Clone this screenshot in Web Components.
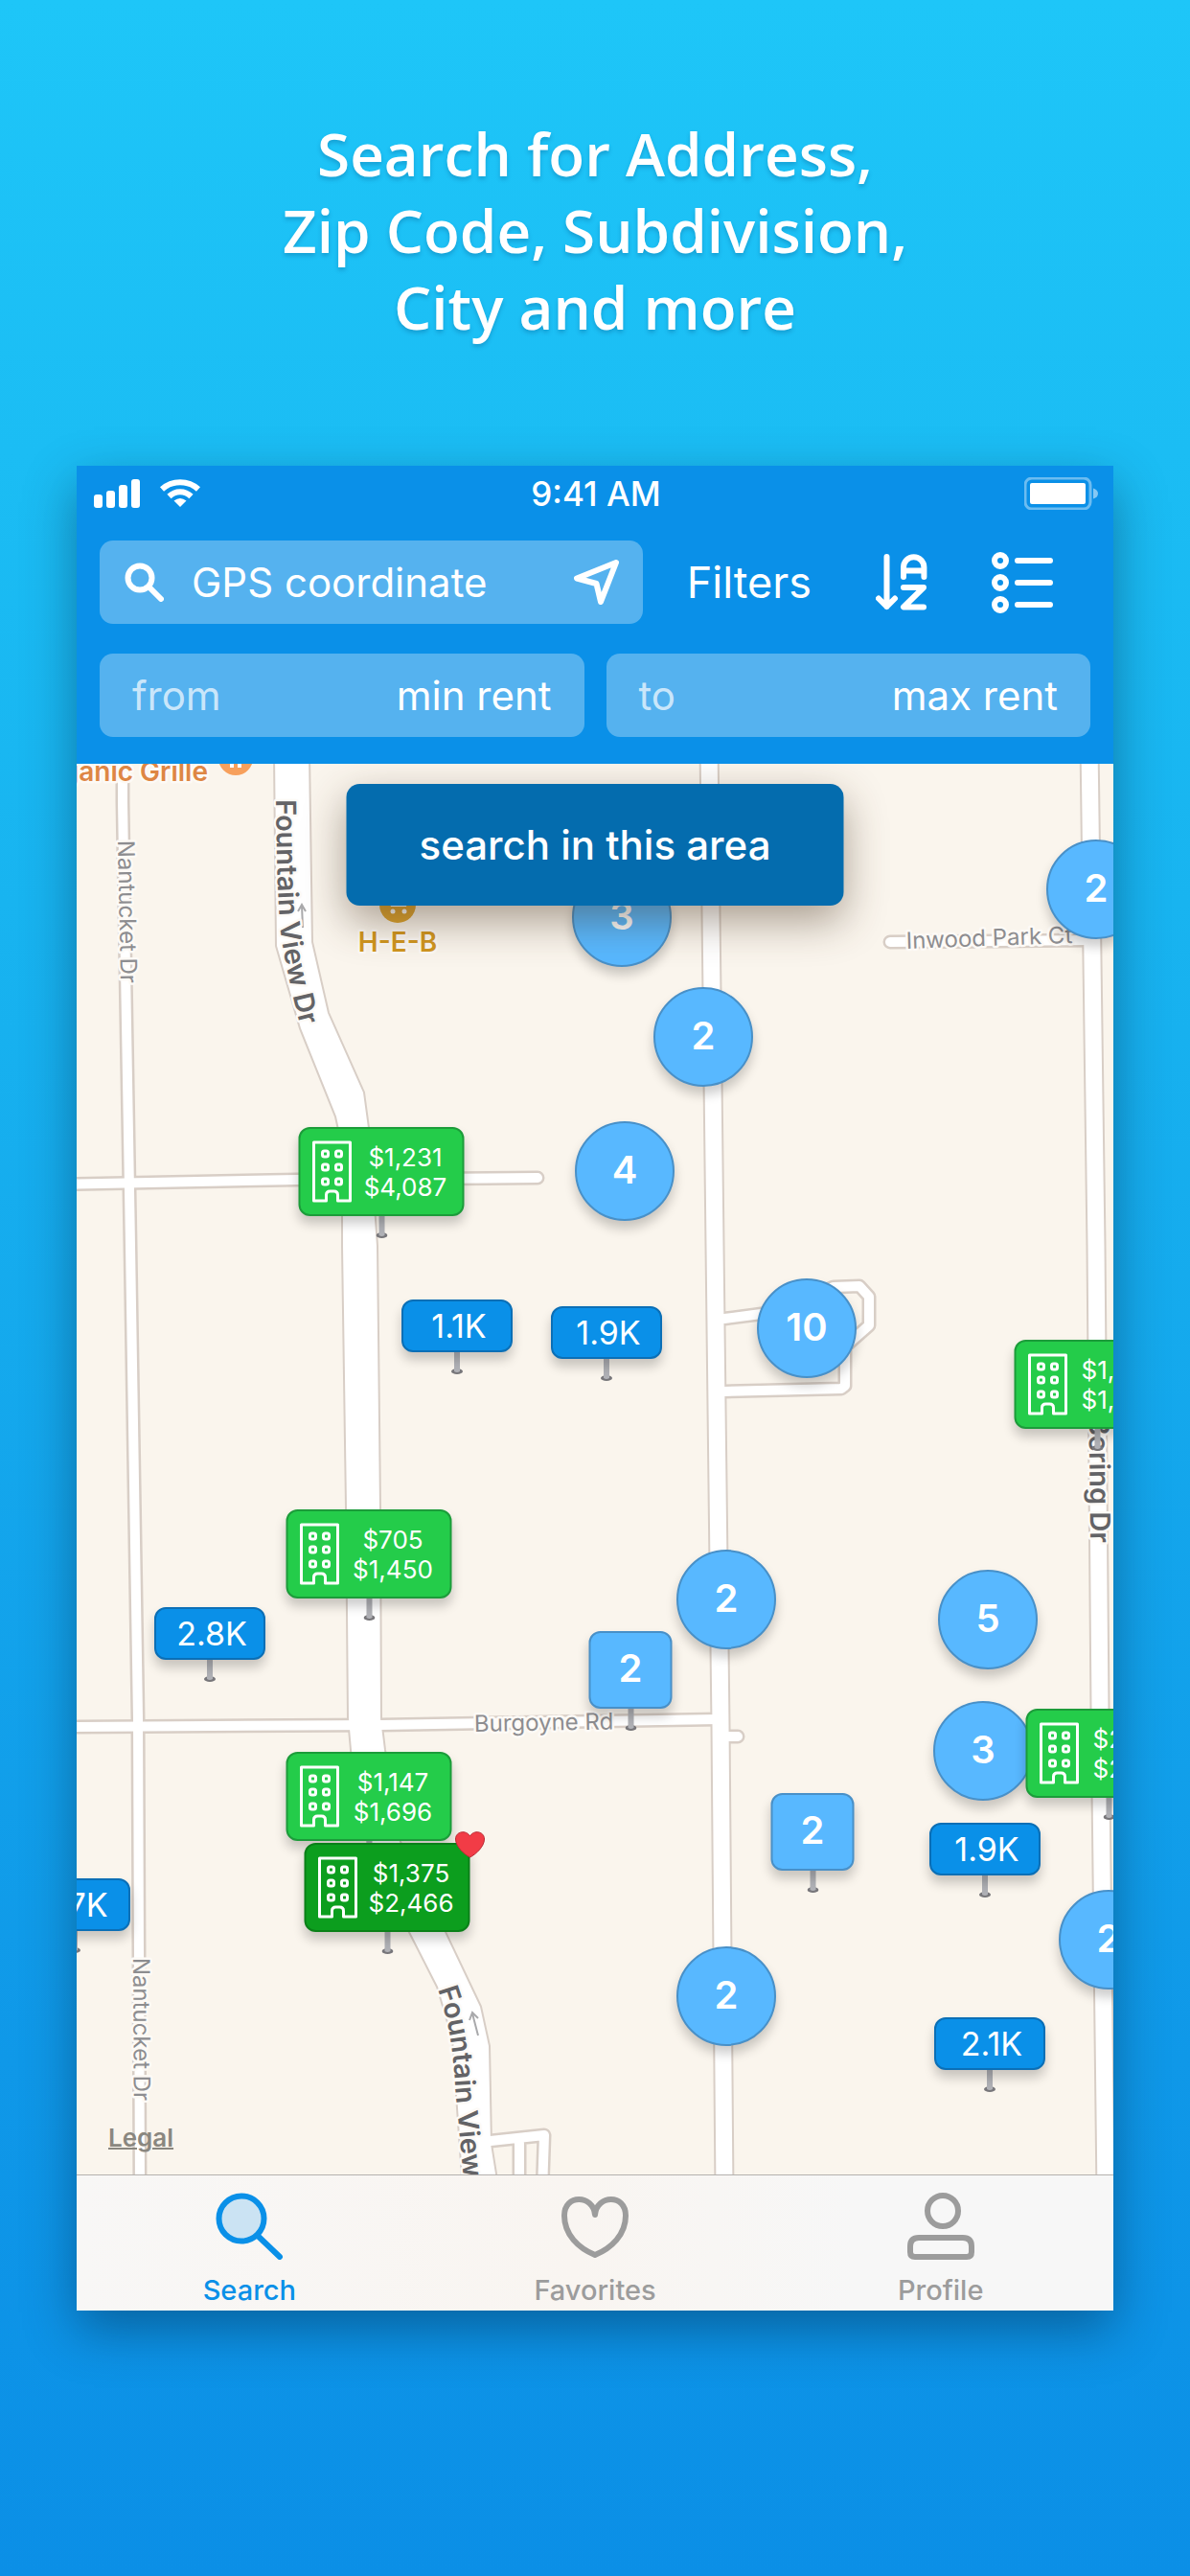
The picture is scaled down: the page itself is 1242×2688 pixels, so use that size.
<!DOCTYPE html>
<html lang="en">
<head>
<meta charset="utf-8">
<meta name="viewport" content="width=device-width, initial-scale=1">
<title>Rental map search</title>
<style>
  html { min-height: 100%; background: linear-gradient(#1ec6f8, #18b4f0 35%, #0f98e8 80%, #0b8fe6); }
  body { margin: 0; font-family: Inter, "Liberation Sans", sans-serif; color: #fff; }
</style>
</head>
<body>
<promo-page></promo-page>

<script>
const define = (name, html, setup) => {
  const template = document.createElement("template");
  template.innerHTML = html;
  customElements.define(name, class extends HTMLElement {
    constructor() {
      super();
      this.attachShadow({ mode: "open" }).append(template.content.cloneNode(true));
    }
    connectedCallback() { if (setup) setup(this, this.shadowRoot); }
  });
};

/* Status bar: signal, wifi, clock, battery */
define("status-bar", `
<style>
  :host { display: grid; grid-template-columns: 1fr auto 1fr; align-items: center; height: 58px; padding: 0 16px 0 18px; column-gap: 8px; font-size: 35px; font-weight: 500; }
  svg { display: block; }
  .left { display: flex; gap: 20px; }
  .right { justify-self: end; }
</style>
<div class="left">
  <svg width="49" height="30" fill="#fff" aria-hidden="true"><rect y="16" width="9" height="14" rx="3"/><rect x="13" y="12" width="9" height="18" rx="3"/><rect x="26" y="6" width="9" height="24" rx="3"/><rect x="39" width="9" height="30" rx="3"/></svg>
  <svg width="42" height="30" fill="none" stroke="#fff" stroke-width="6" aria-hidden="true"><path d="M2 10.500C12.500 .8 29.500 .8 40 10.500"/><path d="M9.500 18C16 11.600 26 11.600 32.500 18"/><path d="M14.500 22.500Q21 17.500 27.500 22.500L21 29Z" fill="#fff" stroke="none"/></svg>
</div>
<span>9:41 AM</span>
<svg class="right" width="77" height="34" aria-hidden="true"><rect x="1" y="1" width="68" height="32" rx="7" fill="none" stroke="#fff" stroke-opacity=".4" stroke-width="3"/><rect x="6" y="6" width="58" height="22" rx="2" fill="#fff"/><path d="M72 11.500q5 1.500 5 5.500t-5 5.500z" fill="#fff" fill-opacity=".5"/></svg>
`);

/* Translucent text box with an optional leading caption or icon */
define("field-box", `
<style>
  :host { display: flex; align-items: center; flex: 1; min-width: 0; height: 87px; box-sizing: border-box; padding: 0 34px; border-radius: 14px; background: rgb(255 255 255 / .31); font-size: 42px; }
  :host([wide]) { padding: 0 25px 0 26px; gap: 29px; }
  label { display: flex; color: rgb(255 255 255 / .7); }
  input { flex: 1; min-width: 0; width: 0; padding: 0; border: 0; outline: 0; background: none; font: inherit; color: #fff; text-align: right; }
  :host([wide]) input { text-align: left; }
  ::slotted(svg), ::slotted(button) { flex: none; }
</style>
<label for="box"><slot></slot></label><input id="box" type="text"><slot name="end"></slot>
`, (host, root) => {
  const input = root.querySelector("input");
  input.value = host.getAttribute("value");
  if (host.hasAttribute("label")) input.setAttribute("aria-label", host.getAttribute("label"));
});

define("search-header", `
<style>
  :host { display: block; background: #0a90e8; }
  form { display: flex; flex-direction: column; gap: 31px; padding: 20px 24px 28px; }
  .row { display: flex; align-items: center; gap: 23px; }
  .actions { display: flex; align-items: center; gap: 67px; padding: 0 39px 0 23px; }
  button { display: block; padding: 0; border: 0; background: none; font: inherit; font-size: 45px; color: #fff; }
  svg { display: block; fill: none; stroke: #fff; stroke-width: 6; stroke-linecap: round; stroke-linejoin: round; }
</style>
<status-bar></status-bar>
<form>
  <div class="row">
    <field-box wide label="Search" value="GPS coordinate">
      <svg width="41" height="41"><circle cx="16" cy="16" r="12.500"/><path d="M26 26L38 38"/></svg>
      <button slot="end" type="button" aria-label="Use my location"><svg width="47" height="47"><path d="M44 3L3 19.500L23.500 25L28 44Z"/></svg></button>
    </field-box>
    <div class="actions">
      <button type="button">Filters</button>
      <button type="button" aria-label="Sort"><svg width="54" height="59"><path d="M11.500 3V55M3 46.500L11.500 55L20 46.500M29 24V14a10.700 10.700 0 0 1 21.400 0V24M29 17.500H50M29 35H50L29 55.500H50"/></svg></button>
      <button type="button" aria-label="List view"><svg width="64" height="64"><circle cx="9" cy="9" r="6"/><circle cx="9" cy="32" r="6"/><circle cx="9" cy="55" r="6"/><path d="M27 9H61M27 32H61M27 55H61"/></svg></button>
    </div>
  </div>
  <div class="row">
    <field-box value="min rent">from</field-box>
    <field-box value="max rent">to</field-box>
  </div>
</form>
`);

/* Marker on the map: --x is its centre, --y its top */
define("map-pin", `
<style>
  :host { position: absolute; left: var(--x); top: var(--y); transform: translateX(-50%); }
  button { display: flex; align-items: center; justify-content: center; box-sizing: border-box; margin: 0; padding: 0; border: 2px solid #0b6fb6; border-radius: 12px; background: #0a90e8; color: #fff; font: inherit; box-shadow: 0 8px 12px rgb(0 0 0 / .2); position: relative; }
  :host([kind="price"]) button { width: 116px; height: 55px; padding-left: 4px; font-size: 34px; }
  :host([kind="cluster"]) button { width: 104px; height: 104px; border-radius: 50%; }
  :host([kind="group"]) button { width: 87px; height: 81px; }
  :host([kind="cluster"]) button, :host([kind="group"]) button { padding-bottom: 4px; border-color: #4890c8; background: #58b8ff; font-size: 40px; font-weight: 600; }
  :host([kind="building"]) button { width: 173px; height: 93px; padding: 0 10px 0 12px; justify-content: flex-start; gap: 6px; border-color: #1c9c3a; background: #24cc4a; font-size: 26px; line-height: 31px; }
  :host([dark]) button { border-color: #0a8018; background: #0c9e1e; }
  .house, .heart, .post { display: none; flex: none; }
  :host([kind="building"]) .house, :host([dark]) .heart { display: block; }
  :host([kind="building"]) .text { flex: 1; }
  :host([edge]) .text { text-align: left; padding-left: 8px; }
  .heart { position: absolute; right: -18px; top: -15px; }
  .post { margin: 0 auto; }
  :host(:not([kind="cluster"])) .post { display: block; }
</style>
<button type="button">
  <svg class="house" width="42" height="65" fill="none" stroke="#fff" stroke-width="3" stroke-linejoin="round" aria-hidden="true"><path d="M2 2H40V63H27V57q0-4-4-4h-4q-4 0-4 4v6H2Z"/><g><rect x="11" y="11" width="6" height="6" rx="2"/><rect x="25" y="11" width="6" height="6" rx="2"/><rect x="11" y="25" width="6" height="6" rx="2"/><rect x="25" y="25" width="6" height="6" rx="2"/><rect x="11" y="40" width="6" height="6" rx="2"/><rect x="25" y="40" width="6" height="6" rx="2"/></g></svg>
  <span class="text"><slot></slot></span>
  <svg class="heart" width="32" height="29" aria-hidden="true"><path d="M16 28C10 25 1 17 1 9C1 1 12-1 16 6C20-1 31 1 31 9C31 17 22 25 16 28Z" fill="#f23c46" stroke="#b82a34"/></svg>
</button>
<svg class="post" width="12" height="23" aria-hidden="true"><ellipse cx="6" cy="20" rx="6" ry="3" fill="#77767a"/><path d="M3 0h6v20q-3 2-6 0z" fill="#b0b1b6"/></svg>
`);

define("street-layer", `
<style>
  :host { display: block; }
  svg { display: block; overflow: hidden; }
  .casing { fill: none; stroke: #d8cec6; stroke-linecap: round; stroke-linejoin: round; }
  .fill { fill: none; stroke: #fff; stroke-linecap: round; stroke-linejoin: round; }
  .narrow.casing { stroke-width: 15; } .narrow.fill { stroke-width: 10; }
  .medium.casing { stroke-width: 21; } .medium.fill { stroke-width: 17; }
  text { font-family: Inter, "Liberation Sans", sans-serif; paint-order: stroke; stroke: #fdfaf6; stroke-width: 5; stroke-linejoin: round; }
  .minor { font-size: 24px; fill: #8d8d90; }
  .major { font-size: 29px; font-weight: 600; fill: #636366; }
  .food { font-size: 28px; font-weight: 600; fill: #de8644; }
  .shop { font-size: 28px; font-weight: 600; fill: #d1961f; }
</style>
<svg width="1082" height="1472" viewBox="0 0 1082 1472">
  <defs>
    <path id="nantucket" d="M48 -20V40L56 503L64 996L66 1490"/>
    <path id="lane" d="M-20 439L230 434L481 432"/>
    <path id="burgoyne" d="M-20 1005L317 1003L670 997"/>
    <path id="small" d="M849 186L1056 184M681 1015H690M676 579L722 573L790 546L817 545L827 556V586L802 608V649L798 652L676 655M432 1437L488 1431L486 1490M462 1436V1490"/>
    <path id="chimney" d="M660 -20L666 503L672 1003L676 1490"/>
    <path id="bering" d="M1057 -20L1064 503L1068 986L1074 1490"/>
    <path id="fountain" d="M207 -10L209 190L234 276L271 368L278 400V503L282 776L284 996L288 1040L305 1128L348 1219L377 1276L393 1330L404 1490H440L432 1440L430 1338L421 1297L384 1219L337 1125L321 1029L317 996L316 776L313 503L304 380L299 343L262 260L245 186L242 -10Z"/>
    <path id="t1" d="M43 80L47 280"/>
    <path id="t2" d="M59 1246L60 1450"/>
    <path id="t3" d="M208 37Q209 130 212 165Q214 200 240 300"/>
    <path id="t4" d="M377 1279Q392 1320 395 1380L407 1510"/>
    <path id="t5" d="M1056 620L1058 813"/>
  </defs>
  <rect width="1082" height="1472" fill="#faf5ed"/>
  <g class="narrow casing"><use href="#nantucket"/><use href="#lane"/><use href="#burgoyne"/><use href="#small"/></g>
  <g class="medium casing"><use href="#chimney"/><use href="#bering"/></g>
  <use href="#fountain" fill="#fff" stroke="#d8cec6" stroke-width="4"/>
  <g class="narrow fill"><use href="#nantucket"/><use href="#lane"/><use href="#burgoyne"/><use href="#small"/></g>
  <g class="medium fill"><use href="#chimney"/><use href="#bering"/></g>
  <use href="#fountain" fill="#fff"/>
  <g fill="none" stroke="#a9a9ab" stroke-width="2"><path d="M236 171L235 148M231 154L235 147L239 154"/><path d="M419 1327L413 1304M410 1311L413 1303L419 1309"/></g>
  <circle cx="166" cy="-6" r="18" fill="#f7a05c"/><path d="M162 -4V4M170 -4V4" stroke="#fff" stroke-width="4"/>
  <circle cx="335" cy="147" r="19" fill="#dda32d"/><path d="M324 140H347L344 149H328Z" fill="#fff"/><circle cx="330" cy="154" r="2.500" fill="#fff"/><circle cx="342" cy="154" r="2.500" fill="#fff"/>
  <text class="food" x="137" y="18" text-anchor="end">Organic Grille</text>
  <text class="shop" x="335" y="196" text-anchor="middle">H-E-B</text>
  <text class="minor" transform="translate(866 193) rotate(-2)">Inwood Park Ct</text>
  <text class="minor" transform="translate(415 1010) rotate(-1)">Burgoyne Rd</text>
  <text class="minor"><textPath href="#t1">Nantucket Dr</textPath></text>
  <text class="minor"><textPath href="#t2">Nantucket Dr</textPath></text>
  <text class="major"><textPath href="#t3">Fountain View Dr</textPath></text>
  <text class="major"><textPath href="#t4">Fountain View</textPath></text>
  <text class="major" text-anchor="end"><textPath href="#t5" startOffset="100%">Bering Dr</textPath></text>
</svg>
`);

define("map-view", `
<style>
  :host { display: block; position: relative; overflow: hidden; background: #faf5ed; }
  .area { position: absolute; top: 21px; left: 50%; transform: translateX(-50%); width: 519px; height: 127px; border: 0; border-radius: 14px; background: #046cae; color: #fff; font: inherit; font-size: 42px; font-weight: 500; box-shadow: 0 16px 44px rgb(70 50 30 / .45); }
  .legal { position: absolute; left: 33px; bottom: 21px; color: #8a8780; font-size: 26px; font-weight: 600; line-height: 34px; text-decoration-thickness: 2px; }
</style>
<street-layer></street-layer>
<map-pin kind="cluster" style="--x:569px;--y:108px">3</map-pin>
<map-pin kind="cluster" style="--x:654px;--y:233px">2</map-pin>
<map-pin kind="cluster" style="--x:572px;--y:373px">4</map-pin>
<map-pin kind="cluster" style="--x:1064px;--y:79px">2</map-pin>
<map-pin kind="cluster" style="--x:762px;--y:537px">10</map-pin>
<map-pin kind="cluster" style="--x:678px;--y:820px">2</map-pin>
<map-pin kind="cluster" style="--x:951px;--y:841px">5</map-pin>
<map-pin kind="cluster" style="--x:946px;--y:978px">3</map-pin>
<map-pin kind="cluster" style="--x:678px;--y:1234px">2</map-pin>
<map-pin kind="cluster" style="--x:1077px;--y:1175px">2</map-pin>
<map-pin kind="group" style="--x:578px;--y:905px">2</map-pin>
<map-pin kind="group" style="--x:768px;--y:1074px">2</map-pin>
<map-pin kind="price" style="--x:397px;--y:559px">1.1K</map-pin>
<map-pin kind="price" style="--x:553px;--y:566px">1.9K</map-pin>
<map-pin kind="price" style="--x:139px;--y:880px">2.8K</map-pin>
<map-pin kind="price" style="--x:-2px;--y:1163px">1.7K</map-pin>
<map-pin kind="price" style="--x:948px;--y:1105px">1.9K</map-pin>
<map-pin kind="price" style="--x:953px;--y:1308px">2.1K</map-pin>
<map-pin kind="building" style="--x:318px;--y:379px">$1,231<br>$4,087</map-pin>
<map-pin kind="building" style="--x:305px;--y:778px">$705<br>$1,450</map-pin>
<map-pin kind="building" style="--x:305px;--y:1031px">$1,147<br>$1,696</map-pin>
<map-pin kind="building" dark style="--x:324px;--y:1126px">$1,375<br>$2,466</map-pin>
<map-pin kind="building" edge style="--x:1065px;--y:601px">$1,<br>$1,</map-pin>
<map-pin kind="building" edge style="--x:1077px;--y:986px">$2<br>$2</map-pin>
<button class="area" type="button">search in this area</button>
<a class="legal" href="#legal">Legal</a>
`);

define("tab-item", `
<style>
  :host { flex: 1; color: #9c9c9c; }
  :host([active]) { color: #0a90e8; }
  a { display: flex; flex-direction: column; align-items: center; gap: 15px; padding: 18px 0 4px; color: inherit; text-decoration: none; font-size: 29px; font-weight: 500; line-height: 34px; }
</style>
<a href="#tab"><slot name="icon"></slot><span><slot></slot></span></a>
`);

define("tab-bar", `
<style>
  :host { display: flex; border-top: 1px solid #b4b1ae; background: linear-gradient(90deg, #f8f7f6, #f9f5f1 48%, #f7f7f7 75%); }
  svg { display: block; fill: none; stroke: currentColor; stroke-width: 6; stroke-linecap: round; stroke-linejoin: round; }
</style>
<tab-item active><svg slot="icon" width="70" height="70"><circle cx="27" cy="27" r="23.500" fill="#cbe3f3"/><path d="M44 45L67 67"/></svg>Search</tab-item>
<tab-item><svg slot="icon" width="70" height="70"><path d="M35 23C33 2 3 1 3 24C3 44 18 58 35 65C52 58 67 44 67 24C67 1 37 2 35 23Z"/></svg>Favorites</tab-item>
<tab-item><svg slot="icon" width="70" height="70"><circle cx="37" cy="19" r="16"/><path d="M12 47H58Q67 47 67 56V62Q67 67 62 67H8Q3 67 3 62V56Q3 47 12 47Z"/></svg>Profile</tab-item>
`);

define("promo-page", `
<style>
  :host { display: flex; flex-direction: column; gap: 126px; padding: 120px 80px 277px; }
  h1 { margin: 0; font: 600 62px/80px "Open Sans", "Liberation Sans", sans-serif; text-align: center; text-shadow: 0 3px 4px rgb(0 60 110 / .25); }
  main { box-shadow: 0 20px 50px rgb(0 40 70 / .45); }
</style>
<h1>Search for Address,<br>Zip Code, Subdivision,<br>City and more</h1>
<main>
  <search-header></search-header>
  <map-view></map-view>
  <tab-bar></tab-bar>
</main>
`);
</script>
</body>
</html>
